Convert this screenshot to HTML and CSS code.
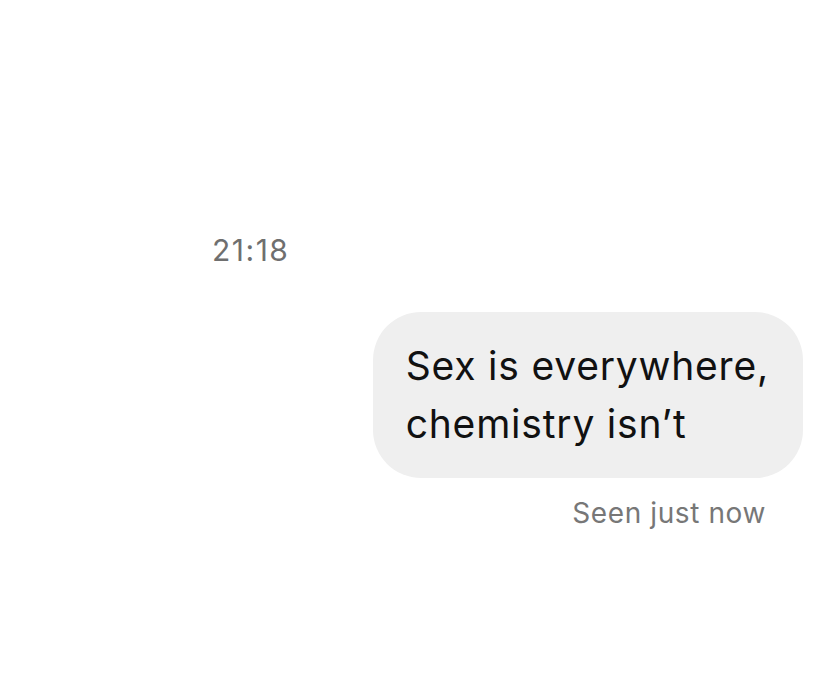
FILE: index.html
```html
<!DOCTYPE html>
<html lang="en">
<head>
    <meta charset="UTF-8">
    <meta name="viewport" content="width=device-width, initial-scale=1.0">
    <title>Chat</title>
    <link rel="stylesheet" href="styles.css">
</head>
<body>
    <div class="chat">
        <div class="timestamp">21:18</div>
        <div class="message-row">
            <div class="bubble">Sex is everywhere,<br>chemistry isn’t</div>
        </div>
        <div class="seen">Seen just now</div>
    </div>
</body>
</html>
```

FILE: styles.css
```css
body {
    margin: 0;
    background-color: #ffffff;
    font-family: Inter, 'Liberation Sans', Arial, sans-serif;
}
.chat {
    display: flex;
    flex-direction: column;
    padding-top: 232px;
}
.timestamp {
    padding-left: 212px;
    font-size: 30px;
    line-height: 36px;
    letter-spacing: 1.5px;
    color: #6f6f6f;
}
.message-row {
    display: flex;
    justify-content: flex-end;
    margin-top: 44px;
    padding-right: 18px;
}
.bubble {
    background-color: #efefef;
    border-radius: 48px;
    padding: 25px 34px 25px 33px;
    font-size: 39px;
    line-height: 58px;
    letter-spacing: 0.8px;
    color: #111111;
}
.seen {
    align-self: flex-end;
    margin-top: 18px;
    padding-right: 55px;
    font-size: 28px;
    line-height: 34px;
    letter-spacing: 0.6px;
    color: #777777;
}
```
